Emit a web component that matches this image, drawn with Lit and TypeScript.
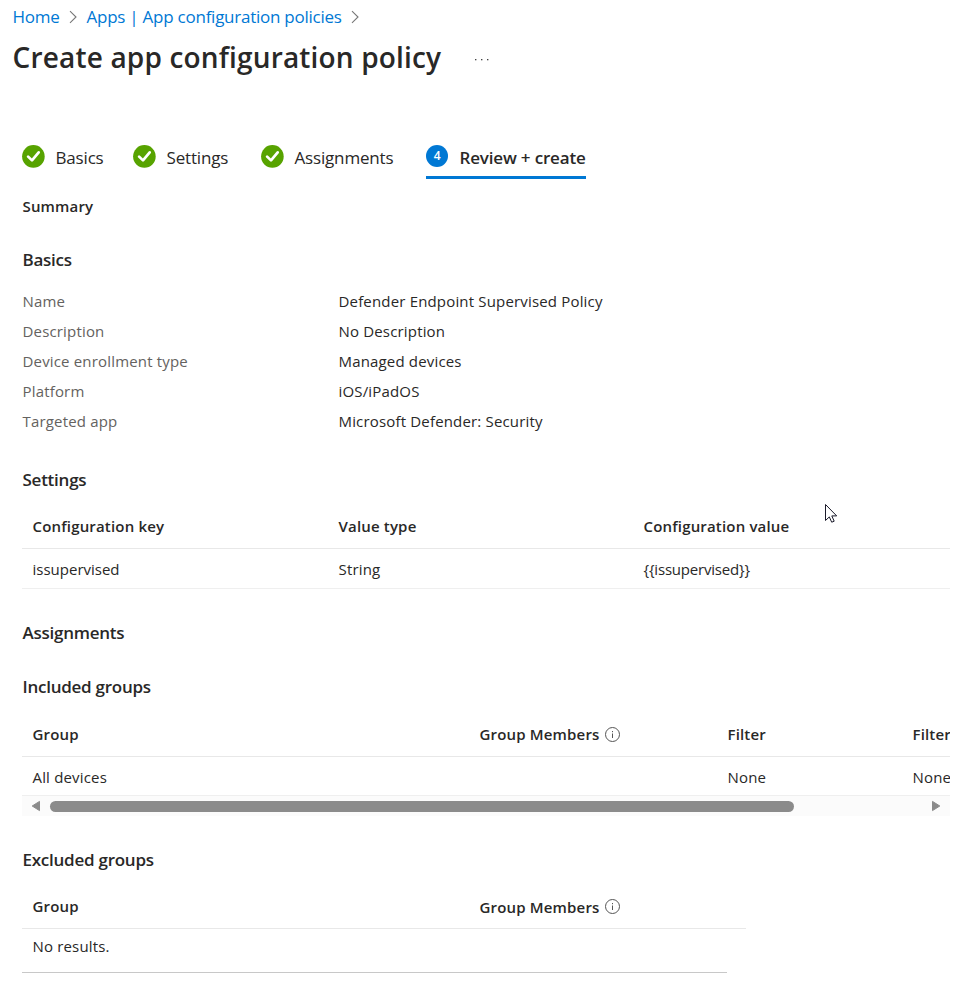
import { LitElement, html, css } from "lit";
import { customElement } from "lit/decorators.js";
import { classMap } from "lit/directives/class-map.js";

const STEPS = [
  { label: "Basics", done: true },
  { label: "Settings", done: true },
  { label: "Assignments", done: true },
  { label: "Review + create", done: false },
];

const BASICS = [
  ["Name", "Defender Endpoint Supervised Policy"],
  ["Description", "No Description"],
  ["Device enrollment type", "Managed devices"],
  ["Platform", "iOS/iPadOS"],
  ["Targeted app", "Microsoft Defender: Security"],
];

const chevron = html`<svg class="chevron" width="9" height="14" viewBox="0 0 9 14">
  <path d="M1 1.2 7 7 1 12.8" fill="none" stroke="#777" stroke-width="1.1" />
</svg>`;

const checkIcon = html`<svg class="badge" width="23" height="23" viewBox="0 0 23 23">
  <circle cx="11.4" cy="11.4" r="11.3" fill="#57a300" />
  <path
    d="M6.1 11.6 10 15.4 16.7 7.4" fill="none" stroke="#fff"
    stroke-width="2.7" stroke-linecap="round" stroke-linejoin="round"
  />
</svg>`;

const infoIcon = html`<svg class="info" width="16" height="16" viewBox="0 0 16 16">
  <circle cx="7.5" cy="8.5" r="7" fill="none" stroke="#555" stroke-width="1" />
  <path d="M7.5 7.5v4.5" stroke="#555" stroke-width="1" />
  <rect x="7" y="5" width="1" height="1.2" fill="#555" />
</svg>`;

@customElement("app-root")
export class AppRoot extends LitElement {
  static styles = css`
    :host {
      display: block;
      position: relative;
      box-sizing: border-box;
      width: 972px;
      height: 992px;
      overflow: hidden;
      background: #fff;
      color: #292827;
      font: 400 15px/20px "Open Sans", "Noto Sans", sans-serif;
      letter-spacing: 0.17px;
      text-indent: 0.5px;
      white-space: nowrap;
    }
    .crumbs {
      display: flex;
      align-items: center;
      height: 24px;
      padding: 5px 0 0 12px;
      font-size: 17px;
      line-height: 24px;
      letter-spacing: -0.25px;
    }
    .crumbs span {
      color: #0078d4;
    }
    .chevron {
      margin: 0 8px 0 9.5px;
    }
    .titlebar {
      display: flex;
      margin-top: 10px;
      padding-left: 12px;
      height: 36px;
    }
    h1 {
      margin: 0;
      width: 462px;
      font-size: 28px;
      line-height: 36px;
      font-weight: 600;
      letter-spacing: 0.17px;
    }
    .more {
      margin-top: 19px;
    }
    .content {
      padding: 70px 22px 0 22px;
    }
    .steps {
      display: grid;
      grid-template-columns: 111px 128px 165px 160px;
      height: 34px;
      font-size: 17px;
      line-height: 26px;
      letter-spacing: -0.17px;
    }
    .step {
      box-sizing: border-box;
      display: flex;
      gap: 10px;
    }
    .current {
      font-weight: 600;
      border-bottom: 3px solid #0078d4;
      border-image: linear-gradient(#7fbbe9 33.3%, #0078d4 33.4%) 3;
    }
    .badge {
      flex: none;
    }
    .number {
      flex: none;
      box-sizing: border-box;
      width: 22px;
      height: 22px;
      margin-right: 1px;
      border-radius: 50%;
      background: #0078d4;
      color: #fff;
      font-size: 12px;
      line-height: 22px;
      text-align: center;
      text-indent: 0;
    }
    h2, h3 {
      margin: 0;
      font-weight: 600;
    }
    h2 {
      margin-top: 17px;
      font-size: 15px;
      line-height: 20px;
    }
    h3 {
      margin-top: 31px;
      height: 24px;
      font-size: 17px;
      line-height: 26px;
      letter-spacing: -0.25px;
    }
    .tight {
      margin-top: 30px;
    }
    .facts {
      display: grid;
      grid-template-columns: 316px 1fr;
      grid-auto-rows: 30px;
      line-height: 30px;
      margin: 15px 0 0;
    }
    .facts dt {
      color: #646260;
    }
    .facts dd {
      margin: 0;
    }
    .table {
      width: 928px;
      margin-top: 17px;
      overflow: hidden;
    }
    .included {
      margin-top: 18px;
    }
    .head, .row {
      box-sizing: border-box;
      display: grid;
      padding-left: 10px;
      border-bottom: 1px solid #e8e8e8;
    }
    .head {
      height: 41px;
      padding-top: 8px;
      font-weight: 600;
    }
    .row {
      height: 40px;
      padding-top: 10px;
      border-color: #efefef;
    }
    .three {
      grid-template-columns: 306px 305px 1fr;
    }
    .four {
      grid-template-columns: 447px 248px 185px 100px;
    }
    .short {
      height: 39px;
    }
    .key {
      letter-spacing: 0;
    }
    .token {
      letter-spacing: -0.2px;
    }
    .excluded {
      width: 724px;
    }
    .excluded .members {
      line-height: 22px;
    }
    .empty {
      width: 705px;
      height: 44px;
      padding-top: 7px;
      border-color: #c8c8c8;
    }
    .members {
      display: flex;
      gap: 5px;
    }
    .info {
      margin-top: 2px;
    }
    .scroll {
      box-sizing: border-box;
      display: flex;
      align-items: center;
      width: 928px;
      height: 20px;
      padding: 0 9px 0 9px;
      background: #fbfbfb;
    }
    .thumb {
      width: 744px;
      height: 11px;
      margin: 0 auto 0 9px;
      border-radius: 6px;
      background: #8b8b8b;
    }
    .cursor {
      position: absolute;
      left: 824px;
      top: 503px;
    }
  `;

  render() {
    return html`
      <nav class="crumbs">
        <span>Home</span>${chevron}<span>Apps | App configuration policies</span>${chevron}
      </nav>
      <div class="titlebar">
        <h1>Create app configuration policy</h1>
        <svg class="more" width="16" height="3" viewBox="0 0 16 3" fill="#444">
          <rect x="1" y="1" width="1.4" height="1.3" />
          <rect x="7" y="1" width="1.4" height="1.3" />
          <rect x="13" y="1" width="1.4" height="1.3" />
        </svg>
      </div>
      <main class="content">
        <div class="steps">
          ${STEPS.map(
            (s, i) => html`<div class=${classMap({ step: true, current: !s.done })}>
              ${s.done ? checkIcon : html`<span class="number">${i + 1}</span>`}
              <span>${s.label}</span>
            </div>`
          )}
        </div>
        <h2>Summary</h2>
        <h3>Basics</h3>
        <dl class="facts">
          ${BASICS.map(([k, v]) => html`<dt>${k}</dt><dd>${v}</dd>`)}
        </dl>
        <h3>Settings</h3>
        <div class="table">
          <div class="head three">
            <span>Configuration key</span><span>Value type</span><span>Configuration value</span>
          </div>
          <div class="row three">
            <span class="key">issupervised</span><span>String</span><span class="token">{{issupervised}}</span>
          </div>
        </div>
        <h3>Assignments</h3>
        <h3 class="tight">Included groups</h3>
        <div class="table included">
          <div class="head four">
            <span>Group</span><span class="members">Group Members ${infoIcon}</span>
            <span>Filter</span><span>Filter</span>
          </div>
          <div class="row four short">
            <span>All devices</span><span></span><span>None</span><span>None</span>
          </div>
        </div>
        <div class="scroll">
          <svg width="10" height="12" viewBox="0 0 10 12">
            <path d="M8.5 1.4v9.2L1.2 6z" fill="#8b8b8b" stroke="#8b8b8b" stroke-linejoin="round" />
          </svg>
          <div class="thumb"></div>
          <svg width="10" height="12" viewBox="0 0 10 12">
            <path d="M1.5 1.4v9.2L8.8 6z" fill="#8b8b8b" stroke="#8b8b8b" stroke-linejoin="round" />
          </svg>
        </div>
        <h3>Excluded groups</h3>
        <div class="table excluded">
          <div class="head four">
            <span>Group</span><span class="members">Group Members ${infoIcon}</span>
          </div>
          <div class="row empty">No results.</div>
        </div>
      </main>
      <svg class="cursor" width="14" height="21" viewBox="0 0 14 21">
        <path
          d="M1.5 1.5v16l3.8-3.6 2.4 5.3 2.5-1-2.4-5.3h4.9z"
          fill="#fff" stroke="#1a1a2a" stroke-width="1" stroke-linejoin="round"
        />
      </svg>
    `;
  }
}
